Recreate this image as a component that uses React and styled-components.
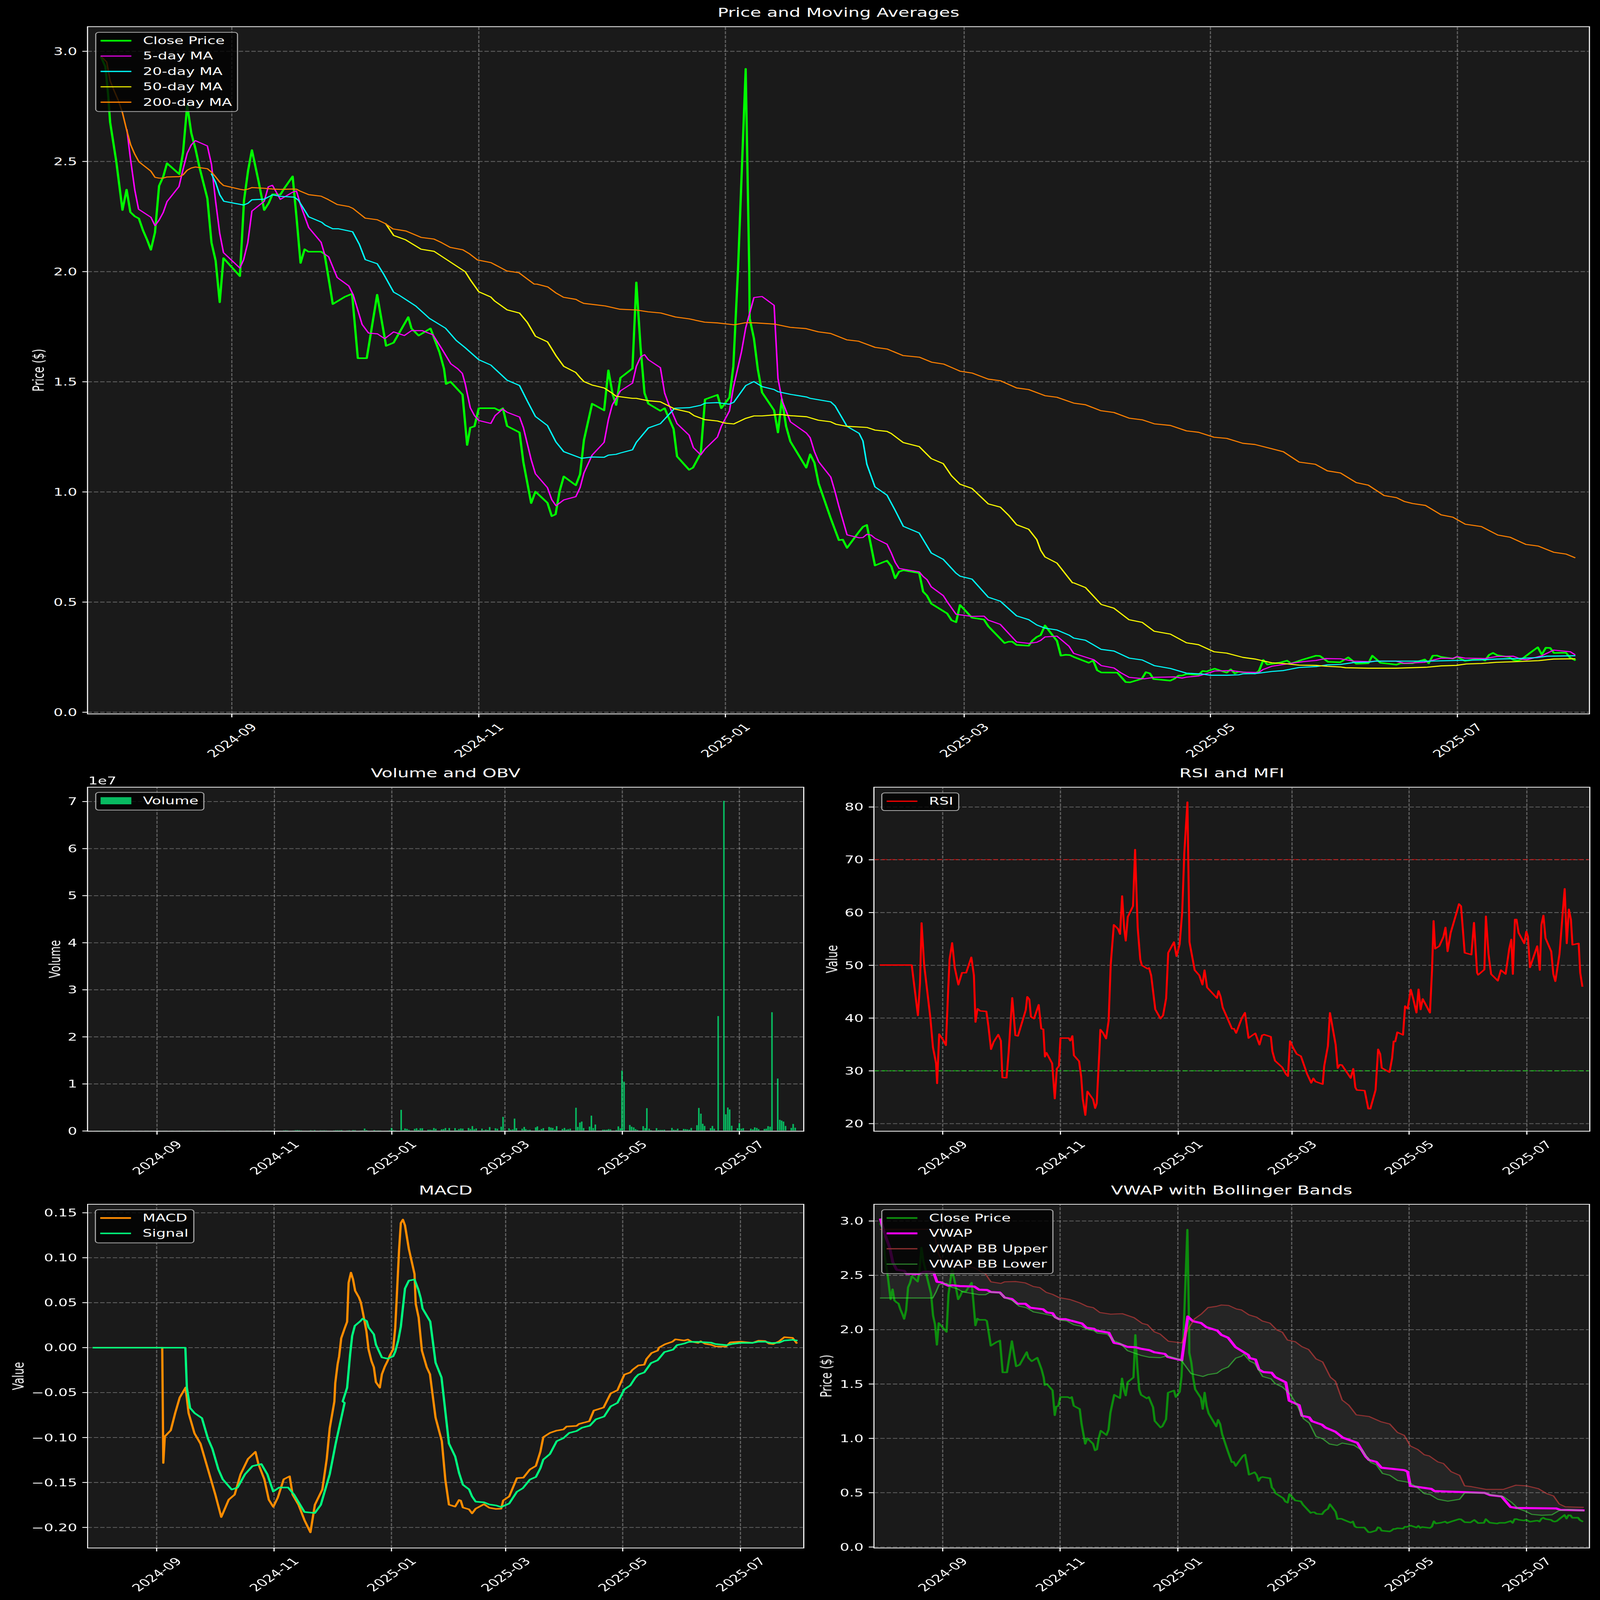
import React, { useEffect, useState } from 'react';
import styled, { createGlobalStyle } from 'styled-components';

/* ---------- reading helpers: series are traced as "x,y" pairs, then scaled to figure pixels ---------- */
const trace = (x0, y0, sx, sy) => (text) =>
  text.trim().split(/\s+/).map((pair) => {
    const [a, b] = pair.split(',').map(Number);
    return [x0 + a / sx, y0 + b / sy];
  });
const Z1 = trace(0, 0, 1.0453, 1.3067);
const Z2 = trace(1500, 0, 1.0453, 1.0453);
const Z4 = trace(2200, 4700, 1.12, 1.568);
const Z5 = trace(0, 4700, 1.206, 1.568);
const Z6 = trace(2200, 3100, 0.6907, 0.9224);
const Z7 = trace(3000, 1500, 1.0667, 1.0453);
const Z8 = trace(0, 1500, 1.0453, 1.0453);
const Z9 = trace(1400, 4000, 1.7422, 2.24);
const Z10 = trace(1000, 4900, 1.206, 1.0453);
const Z11 = trace(3000, 4900, 1.0667, 1.0453);
const Z12 = trace(1300, 1100, 0.9224, 0.9224);
const TH = trace(0, 0, 0.2409, 0.241);
const PX = trace(0, 0, 1, 1);

const closePrice = [
  ...Z1('296,305 308,355 316,500 322,650 340,860 358,1117 370,1008 381,1128 394,1150 406,1162 418,1225 430,1275 441,1328 453,1235 465,988 477,940 488,868 524,926 535,810 547,560 559,708 571,790 583,890 606,1055 618,1290 630,1385 642,1607 653,1372 701,1468 713,1065 725,905 736,798 755,960 772,1117 785,1080 796,1033 807,1033 819,1035 831,1000 855,938 866,1150 878,1398 890,1325 901,1338 938,1338 948,1350 960,1480 968,1568'),
  ...PX('930,1237 963,1208 984,1195 1000,1457 1025,1457 1054,1199 1079,1407 1100,1394 1141,1290 1150,1336 1170,1365 1203,1336 1228,1432'),
  ...Z8('1297,0 1303,65 1316,55 1351,110'),
  ...Z12('5,655 13,590 24,585 35,517 76,517 88,526 97,517 108,584 140,608 150,720 170,873 181,830 212,872 223,922 233,915 243,830 254,773 285,806 296,765 306,637 327,500 358,525 369,375 380,465 389,505 400,403 431,368 441,45 452,290 462,460 472,500 503,527 514,517 525,555 537,595 546,698 577,748 587,740 607,686 618,484 650,467 660,517 681,477 691,360 703,0'),
  ...Z2('610,293'),
  ...Z12('732,0 733,180 744,255 754,370 765,458 796,525 806,608 816,483 827,585 838,642 879,740 889,690 900,722 911,800 942,930 963,1012 973,1010 984,1041 1015,980 1025,962 1035,955 1056,1107 1087,1089 1098,1110 1108,1155 1118,1130 1129,1125 1170,1135 1180,1205 1190,1220 1201,1250 1242,1287 1253,1312 1265,1320 1275,1255 1306,1303 1337,1310 1348,1335 1390,1398 1400,1393 1410,1393 1421,1405 1452,1408 1462,1388 1473,1375 1483,1368 1494,1332 1525,1390 1535,1445 1547,1442 1558,1443'),
  ...Z7('0,1225 45,1250 58,1240 70,1282 82,1291 130,1292 155,1332 168,1333 203,1318 215,1290 227,1295 238,1319 288,1326 300,1318 312,1305 324,1304 336,1298 372,1301 384,1285 396,1287 420,1275 456,1292 468,1278 480,1295 492,1288 540,1296 552,1285 565,1238 577,1257 612,1250 636,1241 648,1253 684,1236 722,1220 734,1221 758,1246 794,1248 818,1227 842,1254 878,1252 890,1220 914,1250 962,1258 974,1252 1010,1252 1046,1236 1058,1252 1070,1220 1082,1219 1094,1225 1130,1232 1142,1225 1166,1242 1202,1234 1214,1233 1226,1240 1238,1216 1250,1208 1262,1218 1298,1226 1310,1238 1322,1241 1334,1236 1358,1210 1383,1184 1395,1215 1407,1186 1420,1187 1431,1208 1467,1207 1479,1228 1493,1238'),
];

const ma5 = [
  ...Z1('371,690 381,840 394,1010 405,1112 441,1155 453,1200 465,1170 477,1130 488,1072 523,992 535,900 547,815 559,770 571,748 606,776 618,875 630,1070 642,1240 653,1343 701,1425 712,1380 724,1290 736,1122 772,1070 784,993 796,985 819,1060 855,1022 866,1015 878,1090 902,1210 938,1288 948,1350 960,1365 985,1475 1019,1520 1032,1568'),
  ...PX('1012,1320 1030,1355 1055,1358 1075,1378 1100,1350 1130,1365 1150,1345 1180,1345 1210,1362 1235,1420 1260,1480 1279,1500 1292,1519'),
  ...Z12('0,425 13,515 24,545 35,563 66,574 77,545 97,520 108,532 140,550 150,590 160,650 170,710 181,763 212,815 223,860 234,883 254,861 285,849 296,815 306,760 327,693 358,645 369,560 379,505 400,452 431,423 441,360 452,325 462,316 472,335 503,365 514,460 525,505 546,575 577,618 588,665 607,692 618,670 650,625 660,585 681,527 691,440 712,305 723,215 744,102 765,98 796,131 806,405 817,490 838,568 879,610 889,628 900,680 911,718 942,775 953,830 963,885 984,992 1015,1003 1025,1002 1035,990 1046,993 1056,1005 1087,1027 1098,1060 1108,1095 1118,1118 1170,1131 1180,1148 1190,1160 1201,1187 1232,1220 1243,1245 1265,1290 1306,1298 1337,1297 1348,1312 1379,1328 1421,1394 1452,1399 1473,1395 1483,1388 1494,1375 1525,1372 1556,1410'),
  ...Z7('0,1210 60,1237 82,1262 120,1272 140,1292 165,1312 210,1318 240,1312 300,1310 323,1315 336,1311 372,1306 396,1296 420,1285 470,1283 504,1290 552,1291 564,1279 590,1265 625,1257 648,1252 684,1245 722,1240 750,1232 795,1233 834,1243 880,1245 900,1243 960,1243 985,1252 1045,1248 1095,1230 1130,1231 1142,1224 1166,1230 1226,1232 1262,1223 1310,1222 1334,1235 1350,1237 1395,1220 1430,1196 1480,1203 1493,1215'),
];

const ma20 = [
  ...Z1('618,925 630,970 642,1035 654,1070 712,1090 725,1080 736,1062 772,1059 796,1036 820,1044 860,1048 872,1065 902,1153 940,1182 950,1197 972,1216 988,1216 1030,1232 1050,1300 1067,1380 1102,1402 1120,1455 1150,1553 1165,1568'),
  ...PX('1162,1245 1200,1295 1245,1335 1275,1385'),
  ...Z12('0,290 35,335 66,355 108,412 140,432 160,490 181,548 212,582 234,644 254,680 300,705 327,700 358,701 369,693 389,690 400,685 431,673 441,645 472,591 503,575 540,517 577,515 607,506 618,498 650,496 680,502 692,495 723,432 744,417 765,436 796,447 806,455 838,465 880,475 889,480 942,493 953,508 984,585 1015,611 1025,640 1035,727 1056,812 1087,843 1108,900 1129,960 1170,985 1201,1060 1232,1084 1265,1136 1275,1147 1306,1158 1348,1226 1379,1241 1421,1296 1452,1310 1473,1330 1494,1342 1525,1349 1556,1368'),
  ...Z7('0,1145 35,1154 82,1193 120,1200 165,1230 204,1238 240,1262 288,1274 336,1294 384,1298 408,1303 456,1303 492,1301 504,1297 540,1296 590,1287 625,1283 672,1270 722,1266 756,1259 795,1257 834,1249 880,1247 900,1243 990,1243 1060,1243 1140,1240 1210,1238 1260,1234 1320,1232 1380,1228 1410,1222 1493,1220'),
];

const ma50 = [
  ...Z1('1127,1190 1150,1252 1185,1275 1230,1325 1268,1336'),
  ...Z12('0,5 13,35 35,80 66,100 76,115 108,148 140,160 160,195 181,247 212,268 234,320 254,360 285,383 296,402 306,417 327,430 358,441 379,461 389,472 431,480 441,480 472,489 503,493 540,520 577,532 590,545 618,560 650,565 670,573 692,576 723,555 744,546 765,546 806,541 816,541 838,545 880,549 910,562 942,568 955,577 984,585 1035,589 1056,599 1087,604 1098,612 1129,646 1170,661 1201,706 1232,725 1253,770 1275,802 1306,818 1348,876 1379,888 1400,918 1421,954 1452,971 1473,1010 1483,1050 1494,1075 1525,1098 1565,1172'),
  ...Z7('0,910 35,930 82,1002 120,1018 165,1067 204,1078 240,1116 288,1128 336,1165 372,1173 418,1203 456,1209 504,1227 540,1234 590,1250 625,1253 672,1260 722,1261 756,1265 795,1268 810,1271 880,1273 960,1273 1050,1269 1095,1263 1140,1261 1170,1255 1215,1253 1260,1248 1320,1245 1386,1241 1430,1234 1493,1233'),
];

const ma200 = [
  ...Z1('296,300 312,330 322,430 333,480 345,530 358,600 370,690 382,770 394,820 406,860 441,910 453,943 465,947 477,947 488,941 524,939 535,930 547,905 559,893 571,888 606,897 618,915 630,940 642,968 653,986 701,1006 713,1010 725,1005 736,997 772,1001 796,1005 819,1007 855,1005 866,1006 878,1017 902,1035 938,1043 958,1060 985,1087 1019,1098 1031,1108 1067,1160 1102,1168 1127,1190 1148,1217 1186,1228 1230,1262 1268,1271 1290,1290 1315,1315 1352,1328 1372,1350 1395,1382 1434,1396 1480,1440 1516,1450 1560,1510'),
  ...Z2('0,1208 32,1220 55,1245 78,1264 114,1273 125,1282 137,1290 200,1301 243,1315 290,1318 325,1326 362,1331 405,1348 445,1356 490,1370 527,1373 577,1381 610,1372 640,1373 693,1378 740,1392 785,1397 822,1411 858,1418 905,1445 940,1451 988,1477 1023,1484 1070,1512 1118,1519 1153,1540 1188,1548 1220,1568'),
  ...Z12('1275,378 1306,385 1348,408 1379,414 1421,441 1452,447 1494,470 1525,476'),
  ...Z7('0,146 35,153 80,178 120,186 165,210 204,217 240,234 288,241 336,264 372,270 418,291 456,296 504,317 540,322 590,340 625,353 672,397 720,406 756,434 795,443 842,484 878,495 925,539 962,548 985,564 1010,573 1048,581 1095,621 1130,631 1167,661 1215,671 1264,707 1300,716 1348,747 1385,754 1430,780 1468,788 1493,803'),
];

const rsi = Z6('180,761 240,761 245,840 252,950 256,830 259,603 264,760 270,860 276,960 281,1070 287,1130 289,1205 293,1020 300,1040 306,1062 310,870 313,740 318,678 323,770 330,835 337,790 345,790 355,732 360,800 363,975 367,925 372,933 384,935 388,990 393,1077 398,1050 407,1022 412,1045 415,1183 423,1184 427,1090 431,970 434,884 440,1025 445,1027 460,930 463,880 467,890 470,955 476,962 485,910 490,1000 494,1002 497,1105 500,1090 511,1130 516,1262 520,1150 524,1140 527,1035 543,1035 546,1045 550,1027 553,1100 563,1122 567,1180 570,1262 575,1324 579,1235 590,1265 594,1298 597,1280 602,1090 604,1003 609,1015 615,1037 620,970 624,760 630,610 638,625 642,645 646,502 650,625 653,670 657,580 667,540 671,328 676,620 681,740 684,762 695,775 698,772 702,800 708,895 710,927 720,962 725,950 731,885 735,715 746,675 751,728 757,683 762,560 766,340 772,150 776,675 786,780 795,800 801,835 805,780 810,845 829,885 832,858 836,880 840,920 858,1000 862,1000 866,1016 877,960 883,940 890,1035 897,1025 903,1017 911,1060 916,1025 920,1022 933,1030 936,1085 941,1120 955,1145 962,1170 966,1178 970,1046 977,1075 983,1095 991,1103 1003,1170 1011,1203 1015,1186 1019,1198 1033,1208 1036,1140 1043,1065 1047,940 1058,1060 1062,1148 1066,1135 1070,1136 1087,1185 1092,1150 1096,1220 1099,1230 1114,1232 1121,1300 1125,1300 1135,1230 1140,1077 1144,1095 1147,1147 1162,1163 1167,1110 1170,1047 1173,1048 1177,1013 1188,1023 1192,915 1197,925 1203,853 1208,890 1214,940 1218,852 1222,928 1226,888 1240,940 1244,780 1247,595 1250,700 1258,690 1266,655 1270,620 1274,710 1280,640 1292,560 1296,532 1300,540 1307,715 1320,722 1325,602 1331,790 1333,798 1345,778 1348,578 1353,720 1358,795 1371,820 1377,780 1386,795 1393,700 1397,665 1400,795 1404,590 1407,590 1411,640 1422,680 1426,635 1429,655 1433,770 1447,690 1452,780 1455,610 1459,575 1463,660 1474,710 1478,795 1482,822 1490,720 1496,570 1500,475 1504,680 1508,552 1512,590 1515,685 1527,680 1530,790 1534,840');

const macd = [
  ...Z5('316,1225 547,1225'),
  ...TH('110,1434 111,1408 115,1402 118,1385 121,1370 125,1360 127,1385 131,1405 135,1415 140,1440 145,1465 149,1487 154,1470 158,1465 162,1445 167,1430 172,1423 174,1435 178,1450 181,1470 184,1477 187,1468 191,1450 195,1447 197,1465 201,1475 205,1490 209,1502 212,1475 217,1460 220,1430 222,1400'),
  ...Z5('1127,1568 1130,1450 1138,1330 1143,1280 1150,1165 1162,1100 1170,1060 1175,810 1183,746 1190,790 1197,862 1210,905 1216,935 1225,1020 1235,1120 1242,1235 1252,1310 1260,1350 1267,1445 1280,1480 1287,1395 1297,1345 1305,1315 1315,1270 1325,1235 1332,1100 1345,600 1351,430 1358,408 1365,445 1378,595 1397,755'),
  ...Z10('195,420 205,480 216,620 232,690 243,720 262,905 283,1005 295,1170 307,1275 328,1283 341,1255 347,1258 354,1287 375,1295 385,1312 397,1292 425,1273 443,1288 465,1293 483,1292 490,1257 510,1240 536,1162 558,1160 580,1125 600,1110 615,1050 625,988 647,970 670,960 693,955 703,943 737,940 745,932 780,920 795,875 828,862 852,802 875,788 898,722 918,713 925,702 945,683 965,680 973,655 990,630 1010,620 1015,607 1035,593 1060,582 1070,572 1100,577 1112,573 1125,582 1147,587 1155,580 1170,591 1190,595 1205,602 1240,603 1255,585 1290,582 1330,587 1350,578 1372,579 1385,590 1400,592 1420,580 1437,563 1465,566 1478,587'),
];

const signal = [
  ...Z5('316,1225 625,1225 630,1480'),
  ...TH('128,1380 131,1385 136,1390 140,1410 143,1420 147,1440 150,1450 156,1460 160,1458 165,1445 170,1437 176,1435 180,1445 184,1462 188,1458 194,1458 198,1465 205,1482 212,1483 216,1475 222,1445 226,1415 232,1375'),
  ...Z5('1155,1568 1170,1480 1180,1270 1187,1150 1196,1085 1215,1055 1222,1040 1236,1055 1242,1095 1260,1140 1267,1205 1287,1287 1307,1295 1325,1280 1332,1250 1342,1180 1351,1090 1365,848 1378,797 1397,790 1410,855 1418,910 1424,975 1450,1058 1468,1320 1488,1415'),
  ...Z10('295,880 307,1015 328,1070 341,1140 354,1190 375,1210 385,1240 397,1262 425,1265 443,1274 465,1278 483,1285 510,1270 536,1220 556,1205 580,1168 600,1157 615,1120 625,1083 647,1060 670,1005 693,992 712,970 737,962 755,948 782,939 802,912 830,900 852,857 875,842 898,785 918,768 935,735 945,722 965,713 988,673 1010,661 1033,626 1062,616 1075,597 1100,590 1115,583 1147,583 1190,586 1205,592 1245,597 1260,592 1290,587 1330,587 1350,582 1372,582 1395,588 1420,586 1437,577 1465,574 1478,577'),
];

const vwap = [
  ...Z4('292,408 300,470 310,530 320,585 330,680 342,728 366,735 372,752 410,755 426,742 440,740 458,745 468,805 480,808 504,830 516,827 540,832 585,835 600,855 625,857 637,870 665,873 680,905 703,915 720,945 745,945 760,970 800,980 812,1000 830,1005 838,1030 850,1043 870,1043'),
  ...Z11('25,505 38,523 60,527 68,535 105,544 120,587 138,592 160,604 185,606 200,612 225,618 240,627 272,634 280,647 322,661 340,475 355,495 380,503 395,520 428,535 440,553 460,565 482,605 520,638 525,652 542,658 552,700 565,711 590,714 600,732 632,755 642,833 672,852 680,897 702,904 710,920 740,935 750,947 780,965 802,990 845,1012 870,1070 880,1085 902,1093 917,1118 985,1128 995,1135 1003,1195 1066,1208 1075,1217 1225,1225 1240,1234 1275,1240 1302,1285 1320,1289 1438,1291 1450,1297 1518,1299'),
];

const bbUpper = [
  ...Z4('292,470 455,470 462,520 472,620 482,665 510,690 545,700 585,715 620,755 637,805 668,815 680,805 715,803 745,812 770,835 790,842 810,872 830,885 850,905 885,918'),
  ...Z11('18,417 40,432 58,437 78,458 110,465 145,463 180,480 205,505 220,510 240,540 258,550 282,580 322,587 340,530 360,485 380,465 400,437 425,432 440,426 462,428 485,443 500,447 522,468 545,478 562,494 585,503 605,532 622,542 637,575 660,582 680,603 700,615 722,655 742,668 765,733 780,750 800,830 820,852 842,893 880,900 915,922 942,932 965,968 985,980 1003,1025 1025,1040 1045,1063 1060,1068 1085,1093 1102,1100 1125,1135 1150,1150 1165,1195 1185,1198 1230,1210 1280,1210 1318,1192 1350,1195 1385,1207 1410,1228 1430,1238 1447,1272 1465,1284 1518,1286'),
];

const bbLower = [
  ...Z4('292,908 455,908 465,870 475,822 498,815 515,840 530,848 550,870 580,880 600,887 620,887 635,870 665,875 680,905 705,925 725,960 748,970 770,997 800,1008 830,1022 855,1050 875,1055'),
  ...Z11('0,510 22,516 40,530 60,535 70,545 100,550 120,578 140,590 160,620 200,640 225,648 258,650 280,642 320,660 338,695 350,718 385,730 400,722 427,716 442,700 460,690 483,652 500,644 507,635 525,665 540,675 563,730 588,740 600,760 622,775 645,805 665,850 685,910 702,928 722,985 742,995 762,1017 785,1023 800,1013 835,1022 860,1045 885,1095 902,1105 920,1142 942,1150 965,1172 998,1180 1022,1200 1045,1228 1062,1232 1085,1252 1115,1260 1150,1252 1165,1225 1225,1225 1250,1235 1280,1240 1305,1265 1325,1292 1345,1302 1365,1316 1395,1320 1425,1318 1447,1300 1475,1296 1518,1300'),
];

/* the close price of the top chart, re-projected on the VWAP axes */
const closeOnVwap = closePrice.map(([x, y]) => [
  2634 + (x - 648) * 0.4762,
  6292 - 442 * ((2897 - y) / 896),
]);

/* volume bars */
const VOL_BASE = 4600;
const lateVolume = Z9('1,1305 10,1215 39,1320 47,1332 57,1329 66,1231 75,1318 103,1323 113,1307 121,1327 131,1334 141,1332 169,1311 177,1302 187,1335 197,1326 206,1318 234,1307 243,1313 252,1316 262,1331 271,1300 299,1325 309,1316 318,1331 327,1327 337,1323 365,1132 374,1307 384,1267 393,1258 402,1317 431,1304 440,1204 449,1317 459,1285 496,1332 505,1332 515,1332 524,1327 533,1329 561,1334 571,1302 581,1320 589,794 599,895 627,1289 636,1305 646,1311 655,1327 664,1334 692,1300 702,1318 710,1136 721,1323 730,1336 757,1318 767,1335 776,1334 785,1334 795,1332 832,1316 841,1332 851,1334 860,1323 889,1325 898,1327 907,1329 917,1332 926,1316 954,1291 963,1134 973,1186 982,1278 991,1298 1020,1318 1029,1298 1038,1323 1057,297 1085,-1664 1094,1192 1104,1130 1113,1148 1123,1296 1151,1318 1160,1271 1170,1323 1179,1318 1216,1323 1226,1329 1235,1311 1245,1316 1254,1327 1282,1325 1291,1323 1300,1300 1310,1305 1319,262 1347,866 1357,1242 1366,1249 1375,1258 1385,1298 1413,1316 1422,1280 1432,1314');
const specialEarly = { 127: 86, 164: 20, 173: 16, 108: 10, 145: 9, 152: 12 };
const earlyVolume = [];
for (let d = -32; d < 178; d += 1) {
  const wd = ((d % 7) + 7) % 7;
  if (wd !== 0 && wd !== 6) {
    const noise = Math.abs(Math.sin(d * 12.9898) * 43758.5453) % 1;
    const base = d < 60 ? 1.5 : d < 122 ? 3 : 10;
    const h = specialEarly[d] || base * (0.3 + noise);
    earlyVolume.push([438.5 + 5.375 * d, VOL_BASE - h]);
  }
}
const volumeBars = [...earlyVolume, ...lateVolume];

/* ---------- axes description, in figure pixels ---------- */
const FIGURE_W = 4470;
const FIGURE_H = 6507;
const DATE_LABELS = ['2024-09', '2024-11', '2025-01', '2025-03', '2025-05', '2025-07'];
const ticksY = (labels, at) => labels.map((label) => ({ label: label.replace('-', '\u2212'), y: at(parseFloat(label)) }));

const PANELS = {
  price: {
    id: 'price', title: 'Price and Moving Averages', box: [245, 109, 4440, 2903], origin: [0, 0], wide: true,
    xTicks: [648, 1338, 2027, 2694, 3382, 4072],
    yTicks: ticksY(['0.0', '0.5', '1.0', '1.5', '2.0', '2.5', '3.0'], (v) => 2897 - 896 * v),
    yLabel: { text: 'Price ($)', x: 122 },
    legendAt: [21, 21],
    legend: [
      { label: 'Close Price', color: '#00ff00', height: 6.25 },
      { label: '5-day MA', color: '#ff00ff', height: 4.17 },
      { label: '20-day MA', color: '#00ffff', height: 4.17 },
      { label: '50-day MA', color: '#ffff00', height: 4.17 },
      { label: '200-day MA', color: '#ff8000', height: 4.17 },
    ],
    lines: [
      { points: closePrice, color: '#00ff00', width: 6.25 },
      { points: ma5, color: '#ff00ff', width: 4.17 },
      { points: ma20, color: '#00ffff', width: 4.17 },
      { points: ma50, color: '#ffff00', width: 4.17 },
      { points: ma200, color: '#ff8000', width: 4.17 },
    ],
  },
  volume: {
    id: 'volume', title: 'Volume and OBV', box: [245, 3202, 2245, 4600], origin: [0, 3100],
    xTicks: [439, 767, 1095, 1411, 1739, 2066],
    yTicks: ticksY(['0', '1', '2', '3', '4', '5', '6', '7'], (v) => 4600 - 191.4 * v),
    yLabel: { text: 'Volume', x: 168 },
    offsetText: { text: '1e7', x: 247, y: 3191 },
    legendAt: [21, 19],
    legend: [{ label: 'Volume', color: '#08ba61', height: 29 }],
    bars: volumeBars,
  },
  rsi: {
    id: 'rsi', title: 'RSI and MFI', box: [2442, 3202, 4441, 4600], origin: [2340, 3100],
    xTicks: [2634, 2963, 3292, 3610, 3937, 4266],
    yTicks: ticksY(['20', '30', '40', '50', '60', '70', '80'], (v) => 4570 - 21.46 * (v - 20)),
    yLabel: { text: 'Value', x: 2339 },
    legendAt: [20, 21],
    legend: [{ label: 'RSI', color: '#ff0000', height: 5 }],
    levels: [
      { y: 3496, color: '#ff0000' },
      { y: 4355, color: '#00ff00' },
    ],
    lines: [{ points: rsi, color: '#ff0000', width: 5.5 }],
  },
  macd: {
    id: 'macd', title: 'MACD', box: [245, 4898, 2245, 6295], origin: [0, 4800],
    xTicks: [438, 766, 1094, 1413, 1740, 2069],
    yTicks: ticksY(['-0.20', '-0.15', '-0.10', '-0.05', '0.00', '0.05', '0.10', '0.15'], (v) => 5481 - 3656 * v),
    yLabel: { text: 'Value', x: 66 },
    legendAt: [20, 20],
    legend: [
      { label: 'MACD', color: '#ff8c00', height: 6.25 },
      { label: 'Signal', color: '#00ff7f', height: 6.25 },
    ],
    lines: [
      { points: macd, color: '#ff8c00', width: 6.25 },
      { points: signal, color: '#00ff7f', width: 6.25 },
    ],
  },
  vwap: {
    id: 'vwap', title: 'VWAP with Bollinger Bands', box: [2442, 4898, 4440, 6295], origin: [2340, 4800],
    xTicks: [2634, 2962, 3291, 3609, 3937, 4265],
    yTicks: ticksY(['0.0', '0.5', '1.0', '1.5', '2.0', '2.5', '3.0'], (v) => 6292 - 442 * v),
    yLabel: { text: 'Price ($)', x: 2323 },
    legendAt: [20, 20],
    legend: [
      { label: 'Close Price', color: '#0d8c0d', height: 6.25 },
      { label: 'VWAP', color: '#ff00ff', height: 8.33 },
      { label: 'VWAP BB Upper', color: '#8c2f2f', height: 4.17 },
      { label: 'VWAP BB Lower', color: '#2f8c2f', height: 4.17 },
    ],
    band: [...bbUpper, ...[...bbLower].reverse()],
    lines: [
      { points: closeOnVwap, color: '#00ff00', width: 6.25, opacity: 0.5 },
      { points: vwap, color: '#ff00ff', width: 8.33 },
      { points: bbUpper, color: '#ff4444', width: 4.17, opacity: 0.5 },
      { points: bbLower, color: '#44ff44', width: 4.17, opacity: 0.5 },
    ],
  },
};

/* ---------- styled parts ---------- */
const GlobalStyle = createGlobalStyle`
  html, body { margin: 0; padding: 0; background: #000; }
`;
const Stage = styled.div`
  width: 100vw;
  height: 100vh;
  overflow: hidden;
  background: #000;
`;
const Figure = styled.main`
  display: grid;
  grid-template-columns: 2340px 2130px;
  grid-template-rows: 3100px 1700px 1707px;
  width: ${FIGURE_W}px;
  height: ${FIGURE_H}px;
  transform-origin: 0 0;
  background: #000;
  color: #fff;
  font-family: 'DejaVu Sans', sans-serif;
`;
const Panel = styled.section`
  grid-column: ${(p) => (p.$wide ? '1 / span 2' : 'auto')};
  box-sizing: border-box;
  padding-left: ${(p) => p.$left}px;
  padding-top: ${(p) => p.$top}px;
  min-width: 0;
`;
const Title = styled.h2`
  width: ${(p) => p.$width}px;
  margin: 0 0 30.65px;
  font-size: 50px;
  font-weight: 400;
  line-height: 50px;
  text-align: center;
  white-space: nowrap;
`;
const Plot = styled.div`
  position: relative;
  box-sizing: border-box;
  width: ${(p) => p.$width}px;
  height: ${(p) => p.$height}px;
  background: #1a1a1a;
  border: 3.3px solid #fff;
`;
const ChartSvg = styled.svg`
  display: block;
  margin: -3.3px;
  overflow: visible;
`;
const GridLine = styled.line`
  stroke: #fff;
  stroke-opacity: 0.3;
  stroke-width: 3.33;
  stroke-dasharray: 12.3 5.3;
`;
const LevelLine = styled.line`
  stroke: ${(p) => p.$color};
  stroke-opacity: 0.5;
  stroke-width: 4.17;
  stroke-dasharray: 15.4 6.7;
`;
const TickMark = styled.line`
  stroke: #fff;
  stroke-width: 3.33;
`;
const AxisText = styled.text`
  fill: #fff;
  font-family: 'DejaVu Sans', sans-serif;
  font-size: 41.67px;
  text-anchor: ${(p) => p.$anchor || 'middle'};
`;
const SeriesLine = styled.polyline`
  fill: none;
  stroke: ${(p) => p.$color};
  stroke-width: ${(p) => p.$width};
  stroke-opacity: ${(p) => p.$opacity ?? 1};
  stroke-linejoin: round;
  stroke-linecap: square;
`;
const Band = styled.polygon`
  fill: #fff;
  fill-opacity: 0.05;
`;
const VolumeBar = styled.rect`
  fill: #00ff7f;
  fill-opacity: 0.7;
`;
const Legend = styled.ul`
  position: absolute;
  left: ${(p) => p.$left}px;
  top: ${(p) => p.$top}px;
  display: flex;
  flex-direction: column;
  gap: 20.83px;
  width: max-content;
  box-sizing: content-box;
  margin: 0;
  padding: 12px 14px 16px 12.7px;
  list-style: none;
  background: rgba(0, 0, 0, 0.8);
  border: 3.3px solid #aaa;
  border-radius: 10px;
`;
const LegendRow = styled.li`
  display: flex;
  align-items: center;
  gap: 32px;
  height: 41.67px;
  font-size: 41.67px;
  line-height: 41.67px;
  white-space: nowrap;
`;
const Swatch = styled.span`
  flex: none;
  width: 86px;
  height: ${(p) => p.$height}px;
  background: ${(p) => p.$color};
`;

/* ---------- chart ---------- */
const toPoints = (pts) => pts.map(([x, y]) => `${x.toFixed(1)},${y.toFixed(1)}`).join(' ');

function Chart({ spec }) {
  const [x0, y0, x1, y1] = spec.box;
  const [ox, oy] = spec.origin;
  const w = x1 - x0;
  const h = y1 - y0;
  const midY = (y0 + y1) / 2;
  const clipId = `clip-${spec.id}`;
  return (
    <Panel $wide={spec.wide} $left={x0 - 1.65 - ox} $top={y0 - 82.3 - oy}>
      <Title $width={w + 3.3}>{spec.title}</Title>
      <Plot $width={w + 3.3} $height={h + 3.3}>
        <ChartSvg
          width={w + 3.3}
          height={h + 3.3}
          viewBox={`${x0 - 1.65} ${y0 - 1.65} ${w + 3.3} ${h + 3.3}`}
        >
          <defs>
            <clipPath id={clipId}>
              <rect x={x0 + 1.65} y={y0 + 1.65} width={w - 3.3} height={h - 3.3} />
            </clipPath>
          </defs>
          <g clipPath={`url(#${clipId})`}>
            {spec.xTicks.map((x) => (
              <GridLine key={x} x1={x} x2={x} y1={y1} y2={y0} />
            ))}
            {spec.yTicks.map((t) => (
              <GridLine key={t.label} x1={x0} x2={x1} y1={t.y} y2={t.y} />
            ))}
            {spec.levels &&
              spec.levels.map((l) => <LevelLine key={l.y} $color={l.color} x1={x0} x2={x1} y1={l.y} y2={l.y} />)}
            {spec.band && <Band points={toPoints(spec.band)} />}
            {spec.bars &&
              spec.bars.map(([x, top]) => (
                <VolumeBar key={x} x={x - 2.15} y={top} width={4.3} height={Math.max(VOL_BASE - top, 0)} />
              ))}
            {spec.lines &&
              spec.lines.map((l) => (
                <SeriesLine key={l.color} points={toPoints(l.points)} $color={l.color} $width={l.width} $opacity={l.opacity} />
              ))}
          </g>
          {spec.xTicks.map((x, i) => (
            <g key={x}>
              <TickMark x1={x} x2={x} y1={y1} y2={y1 + 14.6} />
              <AxisText x={x} y={y1 + 123} transform={`rotate(-45 ${x} ${y1 + 108})`}>
                {DATE_LABELS[i]}
              </AxisText>
            </g>
          ))}
          {spec.yTicks.map((t) => (
            <g key={t.label}>
              <TickMark x1={x0} x2={x0 - 14.6} y1={t.y} y2={t.y} />
              <AxisText $anchor="end" x={x0 - 29} y={t.y + 15}>
                {t.label}
              </AxisText>
            </g>
          ))}
          <AxisText x={spec.yLabel.x} y={midY} transform={`rotate(-90 ${spec.yLabel.x} ${midY})`}>
            {spec.yLabel.text}
          </AxisText>
          {spec.offsetText && (
            <AxisText $anchor="start" x={spec.offsetText.x} y={spec.offsetText.y}>
              {spec.offsetText.text}
            </AxisText>
          )}
        </ChartSvg>
        <Legend $left={spec.legendAt[0] - 1.65} $top={spec.legendAt[1] - 1.65}>
          {spec.legend.map((item) => (
            <LegendRow key={item.label}>
              <Swatch $color={item.color} $height={item.height} />
              {item.label}
            </LegendRow>
          ))}
        </Legend>
      </Plot>
    </Panel>
  );
}

/* the browser's window can be smaller than the figure: the whole figure is fitted into it */
const readFit = () => `scale(${window.innerWidth / FIGURE_W}, ${window.innerHeight / FIGURE_H})`;

export default function App() {
  const [fit, setFit] = useState(readFit);
  useEffect(() => {
    const onResize = () => setFit(readFit());
    window.addEventListener('resize', onResize);
    return () => window.removeEventListener('resize', onResize);
  }, []);
  return (
    <>
      <GlobalStyle />
      <Stage>
        <Figure style={{ transform: fit }}>
          <Chart spec={PANELS.price} />
          <Chart spec={PANELS.volume} />
          <Chart spec={PANELS.rsi} />
          <Chart spec={PANELS.macd} />
          <Chart spec={PANELS.vwap} />
        </Figure>
      </Stage>
    </>
  );
}
